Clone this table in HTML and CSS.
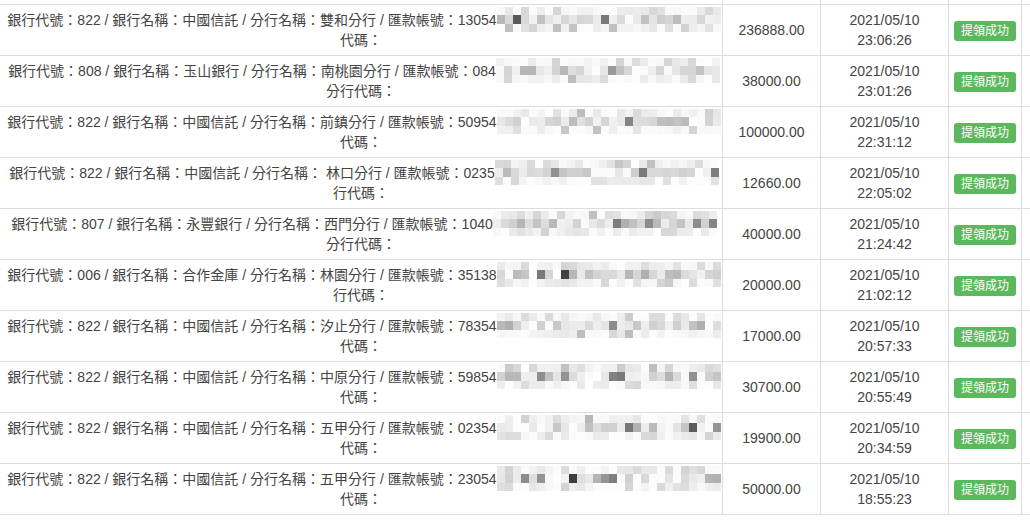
FILE: index.html
```html
<!DOCTYPE html>
<html lang="zh-Hant">
<head>
<meta charset="utf-8">
<title>提領紀錄</title>
<link rel="stylesheet" href="styles.css">
</head>
<body>
<table class="records">
  <colgroup>
    <col class="c-info"><col class="c-amt"><col class="c-time"><col class="c-status"><col class="c-more">
  </colgroup>
  <tbody>
    <tr class="partial"><td></td><td></td><td></td><td></td><td></td></tr>
    <tr>
      <td class="info"><div class="line1">銀行代號：822 / 銀行名稱：中國信託 / 分行名稱：雙和分行 / 匯款帳號：13054<span class="mask"><span class="mosaic" data-seed="11"></span></span></div><div>代碼：</div></td>
      <td class="amt">236888.00</td>
      <td class="time">2021/05/10<br>23:06:26</td>
      <td class="status"><span class="badge">提領成功</span></td>
      <td></td>
    </tr>
    <tr>
      <td class="info"><div class="line1">銀行代號：808 / 銀行名稱：玉山銀行 / 分行名稱：南桃園分行 / 匯款帳號：084<span class="mask"><span class="mosaic" data-seed="23"></span></span></div><div>分行代碼：</div></td>
      <td class="amt">38000.00</td>
      <td class="time">2021/05/10<br>23:01:26</td>
      <td class="status"><span class="badge">提領成功</span></td>
      <td></td>
    </tr>
    <tr>
      <td class="info"><div class="line1">銀行代號：822 / 銀行名稱：中國信託 / 分行名稱：前鎮分行 / 匯款帳號：50954<span class="mask"><span class="mosaic" data-seed="37"></span></span></div><div>代碼：</div></td>
      <td class="amt">100000.00</td>
      <td class="time">2021/05/10<br>22:31:12</td>
      <td class="status"><span class="badge">提領成功</span></td>
      <td></td>
    </tr>
    <tr>
      <td class="info"><div class="line1">銀行代號：822 / 銀行名稱：中國信託 / 分行名稱： 林口分行 / 匯款帳號：0235<span class="mask"><span class="mosaic" data-seed="41"></span></span></div><div>行代碼：</div></td>
      <td class="amt">12660.00</td>
      <td class="time">2021/05/10<br>22:05:02</td>
      <td class="status"><span class="badge">提領成功</span></td>
      <td></td>
    </tr>
    <tr>
      <td class="info"><div class="line1">銀行代號：807 / 銀行名稱：永豐銀行 / 分行名稱：西門分行 / 匯款帳號：1040<span class="mask"><span class="mosaic" data-seed="53"></span></span></div><div>分行代碼：</div></td>
      <td class="amt">40000.00</td>
      <td class="time">2021/05/10<br>21:24:42</td>
      <td class="status"><span class="badge">提領成功</span></td>
      <td></td>
    </tr>
    <tr>
      <td class="info"><div class="line1">銀行代號：006 / 銀行名稱：合作金庫 / 分行名稱：林園分行 / 匯款帳號：35138<span class="mask"><span class="mosaic" data-seed="67"></span></span></div><div>行代碼：</div></td>
      <td class="amt">20000.00</td>
      <td class="time">2021/05/10<br>21:02:12</td>
      <td class="status"><span class="badge">提領成功</span></td>
      <td></td>
    </tr>
    <tr>
      <td class="info"><div class="line1">銀行代號：822 / 銀行名稱：中國信託 / 分行名稱：汐止分行 / 匯款帳號：78354<span class="mask"><span class="mosaic" data-seed="71"></span></span></div><div>代碼：</div></td>
      <td class="amt">17000.00</td>
      <td class="time">2021/05/10<br>20:57:33</td>
      <td class="status"><span class="badge">提領成功</span></td>
      <td></td>
    </tr>
    <tr>
      <td class="info"><div class="line1">銀行代號：822 / 銀行名稱：中國信託 / 分行名稱：中原分行 / 匯款帳號：59854<span class="mask"><span class="mosaic" data-seed="83"></span></span></div><div>代碼：</div></td>
      <td class="amt">30700.00</td>
      <td class="time">2021/05/10<br>20:55:49</td>
      <td class="status"><span class="badge">提領成功</span></td>
      <td></td>
    </tr>
    <tr>
      <td class="info"><div class="line1">銀行代號：822 / 銀行名稱：中國信託 / 分行名稱：五甲分行 / 匯款帳號：02354<span class="mask"><span class="mosaic" data-seed="97"></span></span></div><div>代碼：</div></td>
      <td class="amt">19900.00</td>
      <td class="time">2021/05/10<br>20:34:59</td>
      <td class="status"><span class="badge">提領成功</span></td>
      <td></td>
    </tr>
    <tr>
      <td class="info"><div class="line1">銀行代號：822 / 銀行名稱：中國信託 / 分行名稱：五甲分行 / 匯款帳號：23054<span class="mask"><span class="mosaic" data-seed="101"></span></span></div><div>代碼：</div></td>
      <td class="amt">50000.00</td>
      <td class="time">2021/05/10<br>18:55:23</td>
      <td class="status"><span class="badge">提領成功</span></td>
      <td></td>
    </tr>
  </tbody>
</table>
<script src="script.js"></script>
</body>
</html>
```

FILE: styles.css
```css
html, body {
  margin: 0;
  padding: 0;
  background: #fff;
  overflow: hidden;
}

body {
  font-family: "Liberation Sans", "Noto Sans CJK TC", sans-serif;
  font-size: 14px;
  line-height: 20px;
  color: #444;
}

.records {
  table-layout: fixed;
  width: 1030px;
  border-collapse: separate;
  border-spacing: 0;
}

.c-info { width: 723px; }
.c-amt { width: 98px; }
.c-time { width: 128px; }
.c-status { width: 73px; }
.c-more { width: 8px; }

.records td {
  padding: 5px;
  border-right: 1px solid #ddd;
  border-bottom: 1px solid #ddd;
  text-align: center;
  vertical-align: middle;
  overflow: hidden;
}

.records td:last-child {
  padding: 0;
  border-right: 0;
}

.records .partial td {
  padding: 0;
  height: 4px;
}

.info .line1 {
  white-space: nowrap;
}

.mask {
  display: inline-block;
  position: relative;
  width: 218px;
  height: 20px;
  vertical-align: top;
}

.mosaic {
  position: absolute;
  left: 0;
  top: -3px;
  display: grid;
  grid-template-columns: repeat(28, 8px);
  grid-template-rows: 8px 9px 8px;
  background: #fff;
}

.mosaic i {
  display: block;
}

.badge {
  display: inline-block;
  padding: 3px 6.5px;
  font-size: 12px;
  line-height: 14px;
  color: #fff;
  background: #5cb85c;
  border-radius: 3px;
  vertical-align: middle;
}
```

FILE: script.js
```js
(function () {
  function rng(seed) {
    var a = seed >>> 0;
    return function () {
      a = (a + 0x6d2b79f5) >>> 0;
      var t = a;
      t = Math.imul(t ^ (t >>> 15), t | 1);
      t ^= t + Math.imul(t ^ (t >>> 7), t | 61);
      return ((t ^ (t >>> 14)) >>> 0) / 4294967296;
    };
  }
  function grey(v) {
    v = Math.max(0, Math.min(255, Math.round(v)));
    return "rgb(" + v + "," + v + "," + v + ")";
  }
  var list = document.querySelectorAll(".mosaic");
  list.forEach(function (m) {
    var r = rng(parseInt(m.getAttribute("data-seed"), 10) * 7919);
    var cells = [];
    for (var row = 0; row < 3; row++) {
      for (var col = 0; col < 28; col++) {
        var p = r();
        var v;
        if (row === 1) {
          if (p < 0.14) v = 248 + r() * 6;
          else if (p < 0.46) v = 228 + r() * 14;
          else if (p < 0.76) v = 206 + r() * 18;
          else if (p < 0.90) v = 175 + r() * 25;
          else if (p < 0.97) v = 120 + r() * 35;
          else v = 55 + r() * 40;
        } else {
          if (p < 0.38) v = 246 + r() * 8;
          else if (p < 0.78) v = 230 + r() * 14;
          else if (p < 0.95) v = 210 + r() * 18;
          else v = 185 + r() * 20;
        }
        cells.push('<i style="background:' + grey(v) + '"></i>');
      }
    }
    m.innerHTML = cells.join("");
  });
})();
```
